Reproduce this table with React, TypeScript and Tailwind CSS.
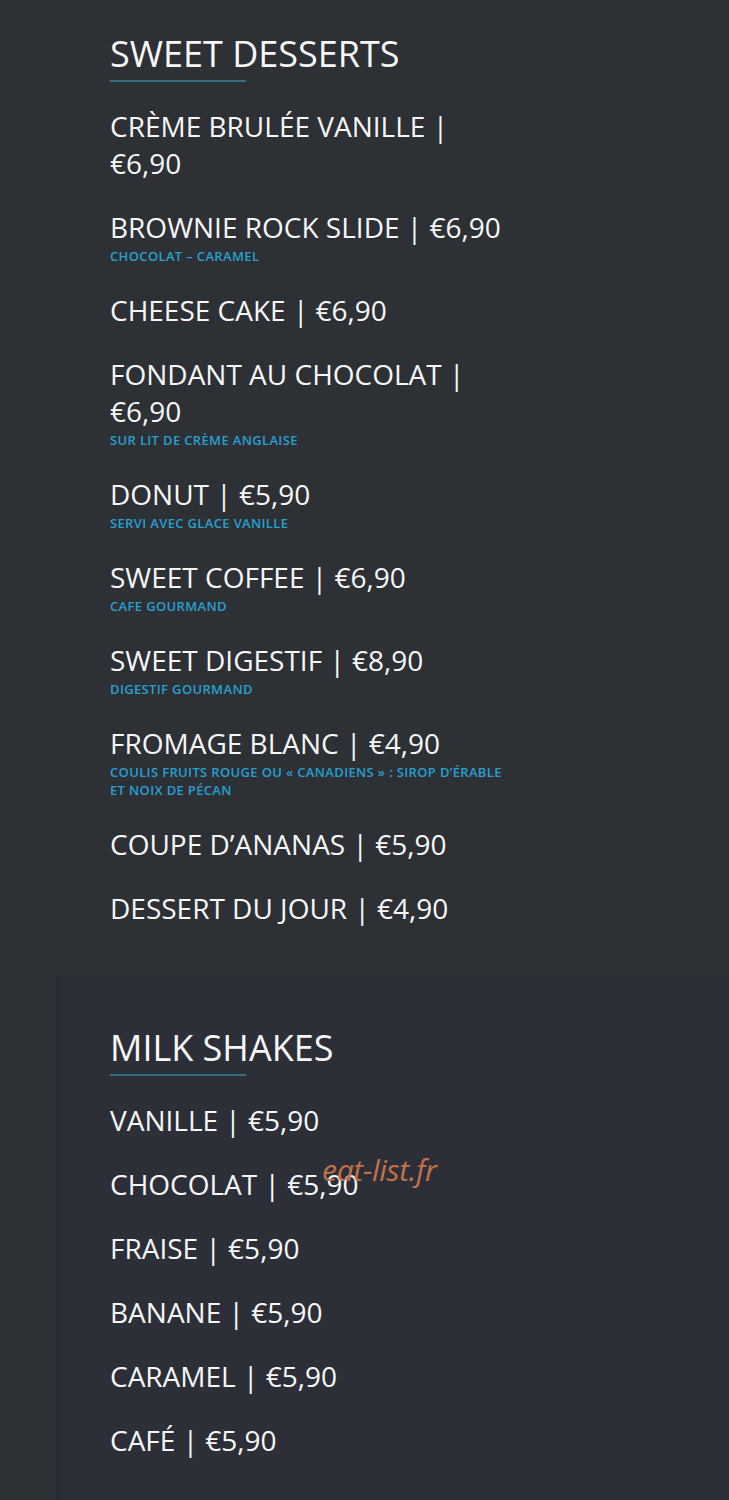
import React from "react";

type Item = { name: string; price: string; note?: string };

const desserts: Item[] = [
  { name: "CRÈME BRULÉE VANILLE", price: "€6,90" },
  { name: "BROWNIE ROCK SLIDE", price: "€6,90", note: "CHOCOLAT – CARAMEL" },
  { name: "CHEESE CAKE", price: "€6,90" },
  { name: "FONDANT AU CHOCOLAT", price: "€6,90", note: "SUR LIT DE CRÈME ANGLAISE" },
  { name: "DONUT", price: "€5,90", note: "SERVI AVEC GLACE VANILLE" },
  { name: "SWEET COFFEE", price: "€6,90", note: "CAFE GOURMAND" },
  { name: "SWEET DIGESTIF", price: "€8,90", note: "DIGESTIF GOURMAND" },
  {
    name: "FROMAGE BLANC",
    price: "€4,90",
    note: "COULIS FRUITS ROUGE OU « CANADIENS » : SIROP D’ÉRABLE ET NOIX DE PÉCAN",
  },
  { name: "COUPE D’ANANAS", price: "€5,90" },
  { name: "DESSERT DU JOUR", price: "€4,90" },
];

const shakes: Item[] = [
  { name: "VANILLE", price: "€5,90" },
  { name: "CHOCOLAT", price: "€5,90" },
  { name: "FRAISE", price: "€5,90" },
  { name: "BANANE", price: "€5,90" },
  { name: "CARAMEL", price: "€5,90" },
  { name: "CAFÉ", price: "€5,90" },
];

function SectionTitle({ children }: { children: React.ReactNode }) {
  return (
    <div className="mb-[26px]">
      <h2 className="text-[36px] leading-[43px] font-medium text-[#f7f7f7]">{children}</h2>
      <div className="mt-[5px] h-[2px] w-[136px] bg-[#2f6f80]" />
    </div>
  );
}

function MenuItem({ item }: { item: Item }) {
  return (
    <div className="mb-[27px]">
      <h3 className="text-[28px] leading-[37px] font-medium text-[#f7f7f7]">
        {item.name} | {item.price}
      </h3>
      {item.note && (
        <p className="mt-[1px] text-[13px] leading-[18px] font-semibold text-[#27a0d0] tracking-[0.35px]">
          {item.note}
        </p>
      )}
    </div>
  );
}

export default function App() {
  return (
    <div
      className="relative w-[729px] min-h-[1500px] bg-[#2d3035]"
      style={{ fontFamily: '"Open Sans", "Noto Sans", sans-serif' }}
    >
      {/* Sweet desserts */}
      <section className="h-[976px] pl-[110px] pt-[32px]">
        <div className="w-[405px]">
          <SectionTitle>SWEET DESSERTS</SectionTitle>
          {desserts.map((d) => (
            <MenuItem key={d.name} item={d} />
          ))}
        </div>
      </section>

      {/* Milk shakes */}
      <section className="flex h-[524px]">
        <div className="w-[60px] bg-[#2d3035] border-r-[4px] border-[#292b30]" />
        <div className="flex-1 bg-[#2c2f37] pl-[50px] pt-[50px]">
          <div className="w-[405px]">
            <SectionTitle>MILK SHAKES</SectionTitle>
            {shakes.map((d) => (
              <MenuItem key={d.name} item={d} />
            ))}
          </div>
        </div>
      </section>

      {/* watermark */}
      <span className="absolute left-[322px] top-[1147px] text-[30px] italic text-[#c4714a] tracking-[-0.3px]">
        eat-list.fr
      </span>
    </div>
  );
}
